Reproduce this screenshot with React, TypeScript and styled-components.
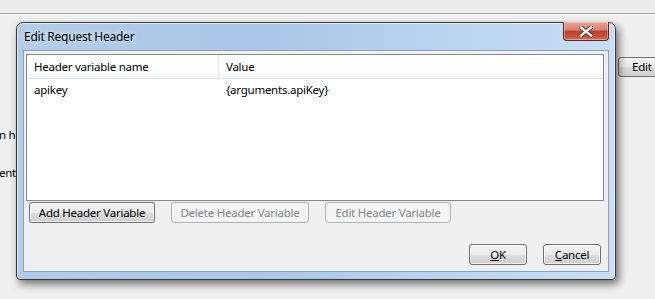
import styled, { createGlobalStyle } from 'styled-components';

const GlobalStyle = createGlobalStyle`
  html, body {
    margin: 0;
    padding: 0;
    background: #f0f0f0;
  }
  body {
    font-family: 'Noto Sans', 'Open Sans', sans-serif;
    font-size: 11.5px;
    letter-spacing: -0.25px;
    color: #000;
  }
`;

const Page = styled.div`
  position: relative;
  width: 655px;
  height: 299px;
  overflow: hidden;
  background: #f0f0f0;
  display: flex;
  flex-direction: column;
`;

const TopStrip = styled.div`
  height: 13px;
  background: #ececec;
  border-bottom: 1px solid #a3a3a3;
  box-shadow: 0 1px 0 #fafafa;
`;

const Body = styled.div`
  flex: 1;
  display: flex;
  justify-content: space-between;
`;

const LeftLabels = styled.div`
  display: flex;
  flex-direction: column;
  gap: 21px;
  padding-top: 112px;
  margin-left: -1px;
`;

const Label = styled.span`
  white-space: nowrap;
  line-height: 17px;
`;

const BackButton = styled.div`
  margin-top: 43px;
  margin-right: -40px;
  width: 62px;
  height: 18px;
  border: 1px solid #707070;
  border-radius: 3px;
  background: linear-gradient(#f2f2f2 0%, #ebebeb 50%, #dddddd 51%, #cfcfcf 100%);
  padding-left: 13px;
  line-height: 18px;
  white-space: nowrap;
`;

const Dialog = styled.div`
  position: absolute;
  left: 16px;
  top: 22px;
  width: 586px;
  height: 249px;
  padding: 0 6px 7px 6px;
  border: 1px solid #3a3a3a;
  border-radius: 7px 7px 4px 4px;
  background: linear-gradient(90deg, #b2cde9 0%, #a9c6e6 40%, #bcd6f1 75%, #c8def4 100%);
  box-shadow: 3px 4px 9px rgba(0, 0, 0, 0.55), inset 0 1px 0 rgba(255, 255, 255, 0.6),
    inset 1px 0 0 rgba(255, 255, 255, 0.5), inset -1px 0 0 rgba(255, 255, 255, 0.5);
  display: flex;
  flex-direction: column;
`;

const TitleBar = styled.div`
  height: 27px;
  display: flex;
  align-items: flex-start;
  justify-content: space-between;
`;

const Title = styled.div`
  padding: 5px 0 0 1px;
  font-size: 12px;
  line-height: 17px;
  color: #000;
  text-shadow: 0 0 6px rgba(255, 255, 255, 0.9);
`;

const CloseButton = styled.div`
  margin-top: -1px;
  width: 44px;
  height: 18px;
  border: 1px solid #5a2a24;
  border-top: none;
  border-radius: 0 0 4px 4px;
  background: linear-gradient(#e8a493 0%, #d7806d 45%, #c0402d 50%, #c8503a 80%, #d9735a 100%);
  box-shadow: inset 0 0 0 1px rgba(255, 255, 255, 0.35);
  display: flex;
  align-items: center;
  justify-content: center;
`;

const Client = styled.div`
  flex: 1;
  border: 1px solid #8a9fb8;
  background: #f0f0f0;
  padding: 3px 4px 6px 2px;
  display: flex;
  flex-direction: column;
`;

const ListBox = styled.div`
  height: 145px;
  border: 1px solid #828790;
  background: #fff;
  display: flex;
  flex-direction: column;
`;

const HeaderRow = styled.div`
  height: 23px;
  display: flex;
  background: linear-gradient(#ffffff 0%, #ffffff 55%, #f5f6f7 100%);
  border-bottom: 1px solid #e2e3e5;
`;

const DataRow = styled.div`
  height: 21px;
  display: flex;
  align-items: center;
`;

const Cell = styled.div<{ $width?: number; $divider?: boolean }>`
  ${(p) => (p.$width ? `width: ${p.$width}px;` : 'flex: 1;')}
  display: flex;
  align-items: center;
  padding-left: 7px;
  box-sizing: border-box;
  white-space: nowrap;
  ${(p) => (p.$divider ? 'border-right: 1px solid #e5e5e5;' : '')}
`;

const ButtonRow = styled.div`
  display: flex;
  gap: 16px;
  margin-top: 1px;
  padding-left: 3px;
`;

const FooterRow = styled.div`
  margin-top: auto;
  display: flex;
  justify-content: flex-end;
  gap: 16px;
  padding-right: 3px;
`;

const Button = styled.div<{ $width: number; $disabled?: boolean }>`
  width: ${(p) => p.$width}px;
  height: 19px;
  border: 1px solid ${(p) => (p.$disabled ? '#adb2b5' : '#707070')};
  border-radius: 3px;
  background: ${(p) =>
    p.$disabled
      ? '#f4f4f4'
      : 'linear-gradient(#f2f2f2 0%, #ebebeb 50%, #dddddd 51%, #cfcfcf 100%)'};
  box-shadow: ${(p) => (p.$disabled ? 'none' : 'inset 0 0 0 1px rgba(255,255,255,0.7)')};
  color: ${(p) => (p.$disabled ? '#838383' : '#000')};
  display: flex;
  align-items: center;
  justify-content: center;
  white-space: nowrap;
  line-height: 17px;
`;

function CloseGlyph() {
  return (
    <svg width="14" height="11" viewBox="0 0 14 11">
      <path
        d="M2 1.5 L12 9.5 M12 1.5 L2 9.5"
        stroke="#4a2a24"
        strokeWidth="4.2"
        strokeLinecap="square"
      />
      <path d="M2 1.5 L12 9.5 M12 1.5 L2 9.5" stroke="#fff" strokeWidth="2.4" strokeLinecap="square" />
    </svg>
  );
}

export default function App() {
  return (
    <Page>
      <GlobalStyle />
      <TopStrip />
      <Body>
        <LeftLabels>
          <Label>n he</Label>
          <Label>ent</Label>
        </LeftLabels>
        <BackButton>Edit</BackButton>
      </Body>

      <Dialog>
        <TitleBar>
          <Title>Edit Request Header</Title>
          <CloseButton>
            <CloseGlyph />
          </CloseButton>
        </TitleBar>
        <Client>
          <ListBox>
            <HeaderRow>
              <Cell $width={192} $divider>
                Header variable name
              </Cell>
              <Cell>Value</Cell>
            </HeaderRow>
            <DataRow>
              <Cell $width={192}>apikey</Cell>
              <Cell>{'{arguments.apiKey}'}</Cell>
            </DataRow>
          </ListBox>
          <ButtonRow>
            <Button $width={124}>Add Header Variable</Button>
            <Button $width={136} $disabled>
              Delete Header Variable
            </Button>
            <Button $width={124} $disabled>
              Edit Header Variable
            </Button>
          </ButtonRow>
          <FooterRow>
            <Button $width={56}>
              <u>O</u>K
            </Button>
            <Button $width={56}>
              <u>C</u>ancel
            </Button>
          </FooterRow>
        </Client>
      </Dialog>
    </Page>
  );
}
